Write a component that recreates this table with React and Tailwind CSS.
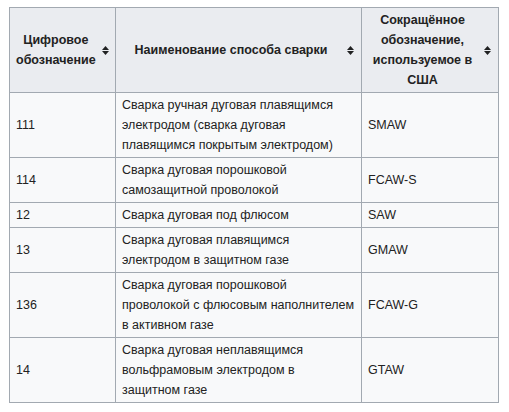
import React from "react";

const rows = [
  {
    code: "111",
    name: ["Сварка ручная дуговая плавящимся", "электродом (сварка дуговая", "плавящимся покрытым электродом)"],
    us: "SMAW",
  },
  { code: "114", name: ["Сварка дуговая порошковой", "самозащитной проволокой"], us: "FCAW-S" },
  { code: "12", name: ["Сварка дуговая под флюсом"], us: "SAW" },
  { code: "13", name: ["Сварка дуговая плавящимся", "электродом в защитном газе"], us: "GMAW" },
  {
    code: "136",
    name: ["Сварка дуговая порошковой", "проволокой с флюсовым наполнителем", "в активном газе"],
    us: "FCAW-G",
  },
  {
    code: "14",
    name: ["Сварка дуговая неплавящимся", "вольфрамовым электродом в", "защитном газе"],
    us: "GTAW",
  },
];

function SortIcon() {
  return (
    <svg width="7" height="9" viewBox="0 0 7 9" className="shrink-0">
      <path d="M3.5 0 L7 4 L0 4 Z" fill="#202122" />
      <path d="M0 5 L7 5 L3.5 9 Z" fill="#202122" />
    </svg>
  );
}

function HeadCell({ lines }) {
  return (
    <th className="border border-[#a2a9b1] bg-[#eaecf0] py-[2px] pl-[6px] pr-0 align-middle font-bold">
      <div className="flex items-center">
        <div className="flex-1 text-center">
          {lines.map((l, i) => (
            <div key={i} className="whitespace-nowrap">{l}</div>
          ))}
        </div>
        <div className="w-[21px] flex justify-center">
          <SortIcon />
        </div>
      </div>
    </th>
  );
}

export default function App() {
  return (
    <div className="bg-white w-[509px] h-[412px] pt-[7px] pl-[9px] text-[12.5px] leading-[20px] text-[#222] font-['Liberation_Sans',Arial,sans-serif]">
      <table className="table-fixed border-collapse border border-[#a2a9b1] bg-[#f8f9fa] w-[489px]">
        <colgroup>
          <col className="w-[106px]" />
          <col className="w-[246px]" />
          <col className="w-[137px]" />
        </colgroup>
        <thead>
          <tr>
            <HeadCell lines={["Цифровое", "обозначение"]} />
            <HeadCell lines={["Наименование способа сварки"]} />
            <HeadCell lines={["Сокращённое", "обозначение,", "используемое в", "США"]} />
          </tr>
        </thead>
        <tbody>
          {rows.map((r) => (
            <tr key={r.code}>
              <td className="border border-[#a2a9b1] py-[2px] px-[6px] align-middle">{r.code}</td>
              <td className="border border-[#a2a9b1] py-[2px] px-[6px] align-middle">
                {r.name.map((l, i) => (
                  <div key={i} className="whitespace-nowrap">{l}</div>
                ))}
              </td>
              <td className="border border-[#a2a9b1] py-[2px] px-[6px] align-middle">{r.us}</td>
            </tr>
          ))}
        </tbody>
      </table>
    </div>
  );
}
